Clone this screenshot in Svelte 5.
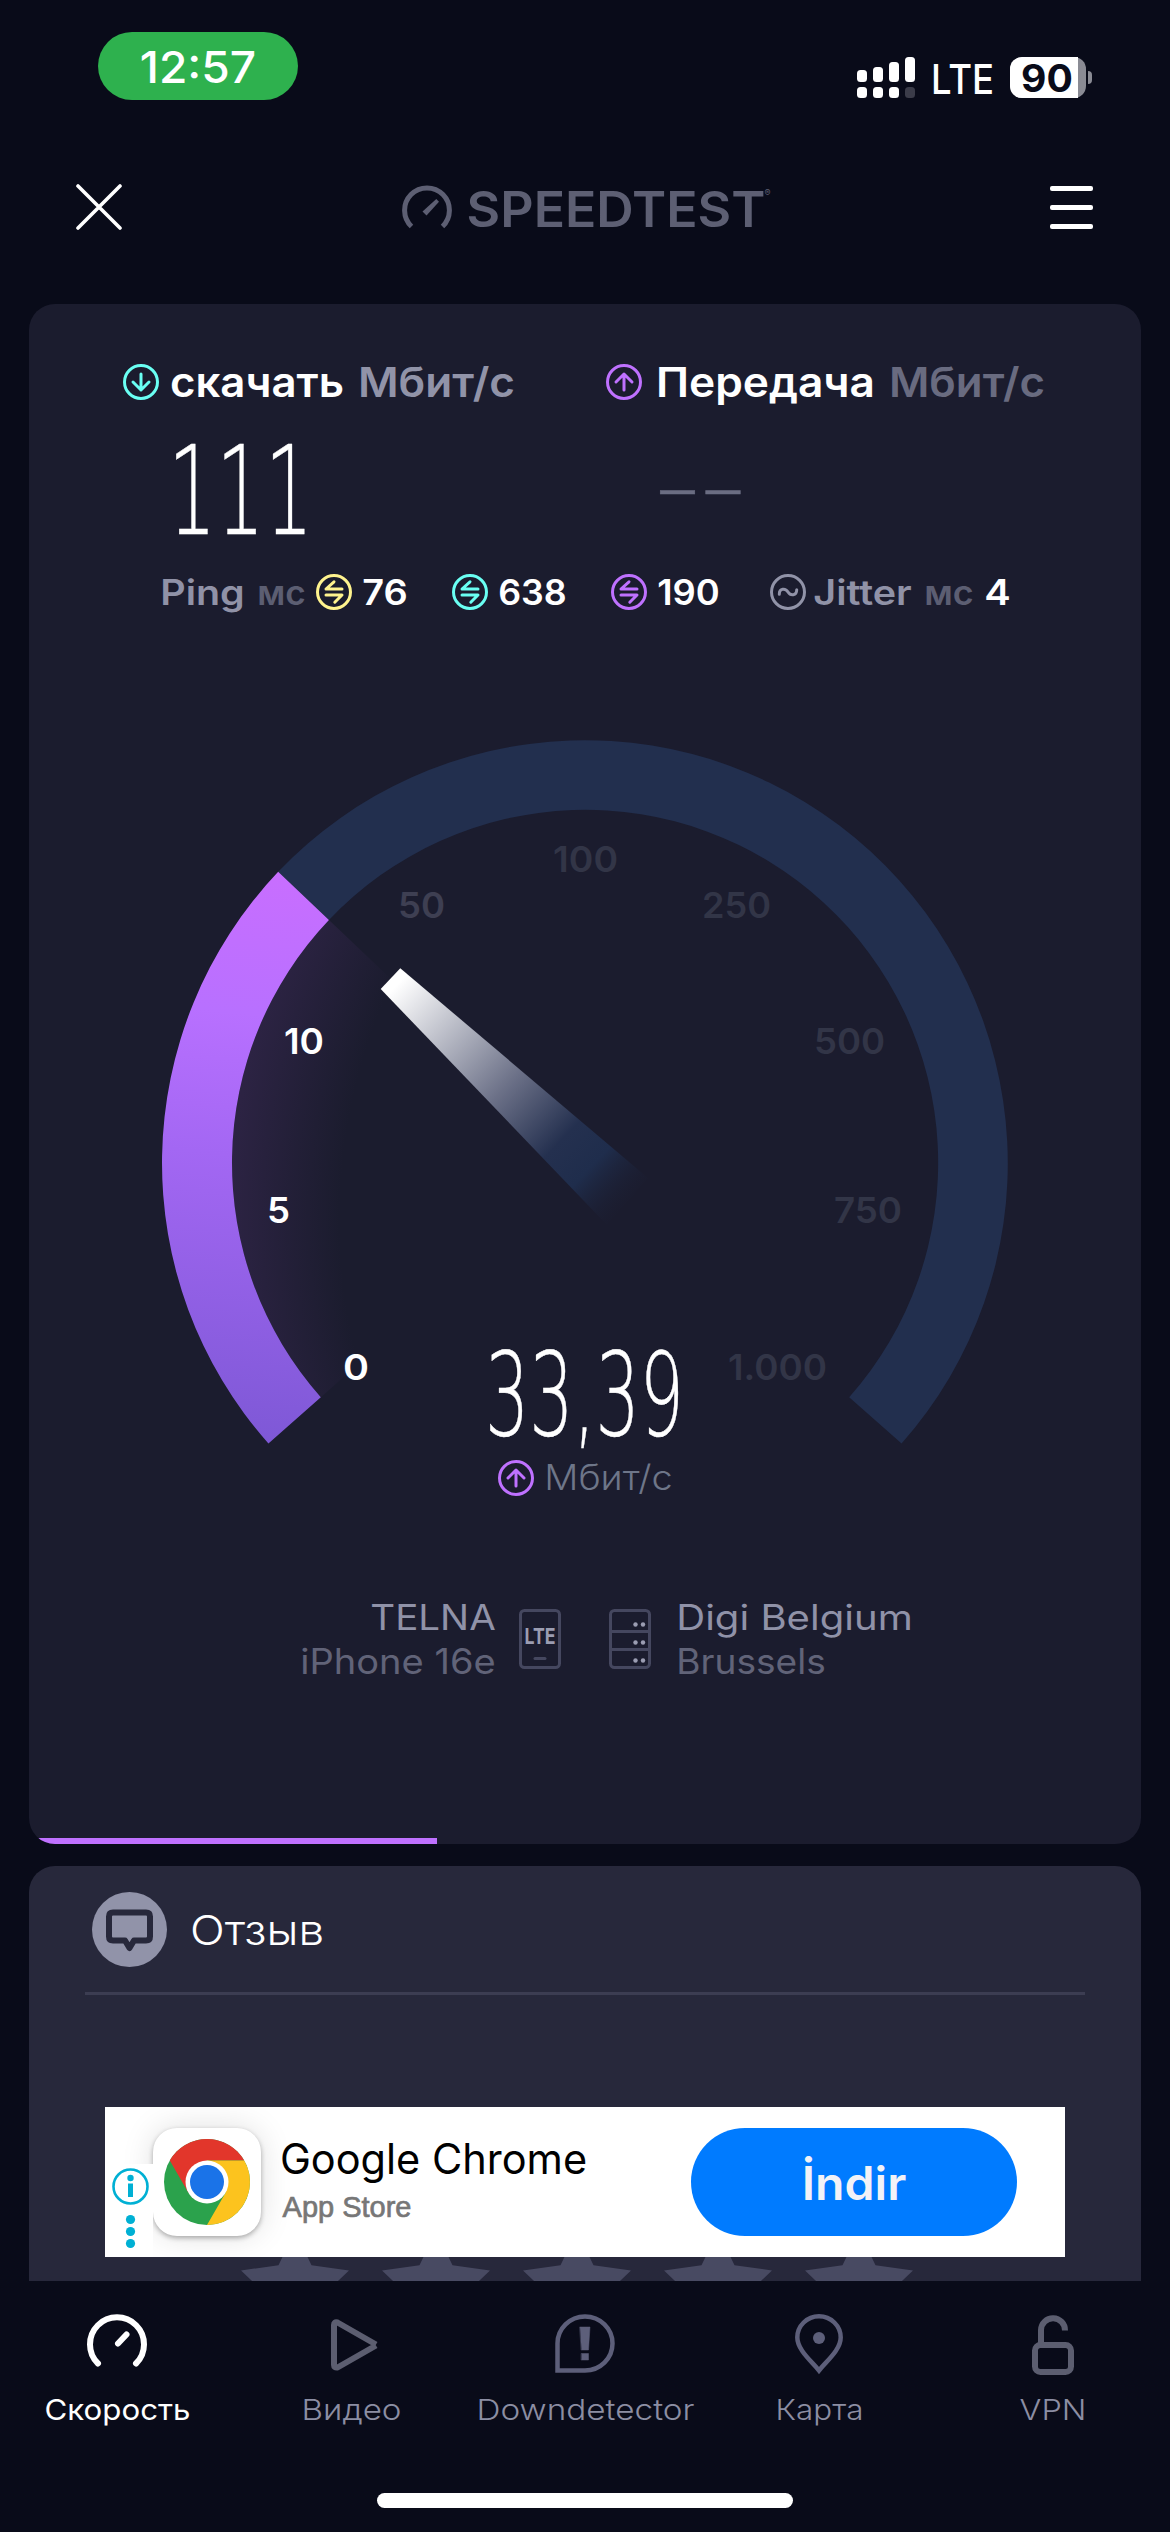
<script>
  const cyan = "#6afff3";
  const purple = "#bf71ff";
  const yellow = "#fff38e";

  const cx = 585;
  const cy = 1163;
  const outer = 423;
  const inner = 353;

  // angles are clockwise degrees from the positive x axis
  const start = 138.45;
  const current = 223.5;
  const end = 401.55;

  const point = (r, deg) => {
    const a = (deg * Math.PI) / 180;
    return `${(cx + r * Math.cos(a)).toFixed(2)} ${(cy + r * Math.sin(a)).toFixed(2)}`;
  };

  const band = (from, to) => {
    const large = to - from > 180 ? 1 : 0;
    return `M${point(outer, from)} A${outer} ${outer} 0 ${large} 1 ${point(outer, to)} L${point(inner, to)} A${inner} ${inner} 0 ${large} 0 ${point(inner, from)}Z`;
  };

  const glow = `M${cx} ${cy} L${point(inner, start)} A${inner} ${inner} 0 0 1 ${point(inner, current)}Z`;

  const ticks = [
    { text: "0", x: 345, y: 1380, w: 22, tone: "on" },
    { text: "5", x: 269, y: 1223, w: 19, tone: "on" },
    { text: "10", x: 286, y: 1054, w: 36, tone: "on" },
    { text: "50", x: 400, y: 918, w: 43, tone: "next" },
    { text: "100", x: 555, y: 872, w: 61, tone: "off" },
    { text: "250", x: 704, y: 918, w: 65, tone: "off" },
    { text: "500", x: 816, y: 1054, w: 67, tone: "off" },
    { text: "750", x: 836, y: 1223, w: 64, tone: "off" },
    { text: "1.000", x: 730, y: 1380, w: 95, tone: "off" },
  ];

  const tabs = [
    { id: "speed", name: "Скорость", w: 143 },
    { id: "video", name: "Видео", w: 97 },
    { id: "down", name: "Downdetector", w: 215 },
    { id: "map", name: "Карта", w: 85 },
    { id: "vpn", name: "VPN", w: 64 },
  ];
</script>

<!-- one line of text, its box is as high as the capitals -->
{#snippet label(text, w, size, weight = 400)}
  <svg class="label" width={w} height={size * 0.727} font-size={size} font-weight={weight}>
    <text x={-size * 0.05} y={size * 0.727} textLength={w + size * 0.1} lengthAdjust="spacingAndGlyphs">{text}</text>
  </svg>
{/snippet}

{#snippet round(kind, color)}
  <svg class="round" width="36" height="36" viewBox="0 0 36 36" stroke={color}>
    <circle cx="18" cy="18" r="16.5" />
    {#if kind === "down"}
      <path d="M18 10V26M10 18l8 8 8-8" />
    {:else if kind === "up"}
      <path d="M18 26V10M10 18l8-8 8 8" />
    {:else if kind === "swap"}
      <path d="M26 15H10L18 7.8M10 21H26L18.8 28.2" />
    {:else}
      <path d="M9.3 20.2C9.3 14 15.5 14 18 18s8.7 4 8.7-2.2" />
    {/if}
  </svg>
{/snippet}

<div class="screen">
  <div class="status">
    <div class="clock">{@render label("12:57", 112, 44, 500)}</div>
    <div class="system">
      <svg width="58" height="41" viewBox="0 0 58 41" fill="#fff">
        <rect x="0" y="13" width="10" height="12" rx="3.5" />
        <rect x="16" y="10" width="10" height="15" rx="3.5" />
        <rect x="32" y="5" width="10" height="20" rx="3.5" />
        <rect x="48" y="0" width="10" height="25" rx="3.5" />
        <rect x="0" y="30" width="10" height="11" rx="3.5" />
        <rect x="16" y="30" width="10" height="11" rx="3.5" />
        <rect x="32" y="30" width="10" height="11" rx="3.5" />
        <rect x="48" y="30" width="10" height="11" rx="3.5" fill="#3b3c49" />
      </svg>
      <div class="lte">{@render label("LTE", 59, 41, 500)}</div>
      <div class="battery">
        <div class="level">{@render label("90", 48, 38, 700)}</div>
      </div>
      <div class="nub"></div>
    </div>
  </div>

  <header>
    <svg width="46" height="46" viewBox="0 0 46 46" fill="none" stroke="#fff" stroke-width="3.6" stroke-linecap="round">
      <path d="M2 2L44 44M44 2L2 44" />
    </svg>
    <div class="logo">
      <svg width="50" height="44" viewBox="0 0 50 44" fill="none" stroke="#5d5f73" stroke-width="5">
        <path d="M9.5 41.5A22.4 22.4 0 1 1 40.5 41.5" />
        <path d="M20.5 26.5L34.3 14L37 16.8L24.5 30.5Z" fill="#5d5f73" stroke="none" />
      </svg>
      {@render label("SPEEDTEST", 294, 49, 600)}
      <sup>®</sup>
    </div>
    <div class="menu"><i></i><i></i><i></i></div>
  </header>

  <section class="card test">
    <div class="heads">
      <div class="head">
        {@render round("down", cyan)}
        {@render label("скачать", 170, 41, 600)}
        <span class="unit">{@render label("Мбит/с", 153, 41, 600)}</span>
      </div>
      <div class="head">
        {@render round("up", purple)}
        <span class="wide">{@render label("Передача", 215, 41, 600)}</span>
        <span class="unit dim">{@render label("Мбит/с", 152, 41, 600)}</span>
      </div>
    </div>

    <div class="results">
      <svg class="thin" width="129" height="90" font-size="123">
        <text x="-8" y="90" textLength="145" lengthAdjust="spacingAndGlyphs">111</text>
      </svg>
      <svg class="thin dashes" width="82" height="90" font-size="86">
        <text x="-4" y="72" letter-spacing="2.5">––</text>
      </svg>
    </div>

    <div class="latency">
      <span class="soft">{@render label("Ping", 81, 35, 600)}</span>
      <span class="ms">{@render label("мс", 45, 35, 600)}</span>
      {@render round("swap", yellow)}
      <span class="value">{@render label("76", 42, 35, 600)}</span>
      {@render round("swap", cyan)}
      <span class="value">{@render label("638", 65, 35, 600)}</span>
      {@render round("swap", purple)}
      <span class="value last">{@render label("190", 59, 35, 600)}</span>
      {@render round("wave", "#9193a8")}
      <span class="soft jitter">{@render label("Jitter", 95, 35, 600)}</span>
      <span class="ms">{@render label("мс", 46, 35, 600)}</span>
      <span class="value">{@render label("4", 23, 35, 600)}</span>
    </div>

    <svg class="gauge" width="856" height="716" viewBox="157 735 856 716">
      <defs>
        <linearGradient id="fill" gradientUnits="userSpaceOnUse" x1="330" y1="880" x2="270" y2="1444">
          <stop offset="0" stop-color="#c86eff" />
          <stop offset="0.25" stop-color="#b870ff" />
          <stop offset="0.5" stop-color="#a367f3" />
          <stop offset="1" stop-color="#7e58d6" />
        </linearGradient>
        <linearGradient id="needle" gradientUnits="userSpaceOnUse" x1="392" y1="980" x2="633" y2="1210">
          <stop offset="0.02" stop-color="#fff" />
          <stop offset="0.47" stop-color="#6b7087" />
          <stop offset="0.7" stop-color="#24304f" />
          <stop offset="0.82" stop-color="#1f2d4c" />
          <stop offset="1" stop-color="#1b1c2e" stop-opacity="0" />
        </linearGradient>
        <radialGradient id="shade" gradientUnits="userSpaceOnUse" cx="900" cy="1220" r="670">
          <stop offset="0.836" stop-color="#2c2343" stop-opacity="0" />
          <stop offset="1" stop-color="#2c2343" />
        </radialGradient>
      </defs>
      <path d={glow} fill="url(#shade)" />
      <path d={band(current, end)} fill="#222f4e" />
      <path d={band(start, current)} fill="url(#fill)" />
      <path d="M380.7 989L400.3 968.2L648 1178L607 1225Z" fill="url(#needle)" />
      {#each ticks as tick}
        <text class={tick.tone} x={tick.x - 2} y={tick.y} textLength={tick.w + 4} lengthAdjust="spacingAndGlyphs">{tick.text}</text>
      {/each}
    </svg>

    <div class="live">
      <svg class="thin" width="188" height="88" font-size="116">
        <text x="-5" y="86" textLength="199" lengthAdjust="spacingAndGlyphs">33,39</text>
      </svg>
      <div class="live-unit">
        {@render round("up", purple)}
        {@render label("Мбит/с", 125, 35, 300)}
      </div>
    </div>

    <div class="hosts">
      <div class="host right">
        {@render label("TELNA", 122, 35, 400)}
        <span>{@render label("iPhone 16e", 192, 35, 400)}</span>
      </div>
      <svg class="phone" width="42" height="60" viewBox="0 0 42 60" fill="none" stroke="#45475f" stroke-width="3">
        <rect x="1.5" y="1.5" width="39" height="57" rx="4" />
        <path d="M16 49.5H26" stroke-linecap="round" />
        <text class="chip" x="5.5" y="35" textLength="31" lengthAdjust="spacingAndGlyphs">LTE</text>
      </svg>
      <svg class="server" width="42" height="60" viewBox="0 0 42 60" fill="none" stroke="#45475f" stroke-width="3">
        <rect x="1.5" y="1.5" width="39" height="57" rx="4" />
        <path d="M1.5 22.5H40.5M1.5 40.5H40.5" />
        <g fill="#9b9db2" stroke="none">
          {#each [15.5, 33.5, 51.5] as y}
            <circle cx="26.5" cy={y} r="2.2" />
            <circle cx="34" cy={y} r="2.2" />
          {/each}
        </g>
      </svg>
      <div class="host">
        {@render label("Digi Belgium", 233, 35, 400)}
        <span>{@render label("Brussels", 146, 35, 400)}</span>
      </div>
    </div>

    <div class="progress"></div>
  </section>

  <section class="card review">
    <div class="title">
      <svg width="75" height="75" viewBox="0 0 75 75">
        <circle cx="37.5" cy="37.5" r="37.5" fill="#9193a9" />
        <path d="M21 20.5H54Q58 20.5 58 24.5V44.5Q58 48.5 54 48.5H42L37.5 56L33 48.5H21Q17 48.5 17 44.5V24.5Q17 20.5 21 20.5Z" fill="none" stroke="#27283b" stroke-width="6" stroke-linejoin="round" />
      </svg>
      {@render label("Отзыв", 130, 41, 300)}
    </div>
    <hr />
    <div class="stars">
      {#each Array(5) as _}
        <svg width="108" height="104" viewBox="-54 -57 108 104" fill="#484a62">
          <path d="M0-57L16.5-22.7L54-17.6L26.6 8.7L33.5 46L0 28L-33.5 46L-26.6 8.7L-54-17.6L-16.5-22.7Z" />
        </svg>
      {/each}
    </div>

    <div class="ad">
      <div class="choices">
        <svg width="48" height="93" viewBox="0 0 48 93" fill="#00b0d4">
          <circle cx="25.5" cy="22.5" r="17" fill="none" stroke="#00b0d4" stroke-width="2.6" />
          <circle cx="25.5" cy="14" r="3.2" />
          <rect x="23" y="19.5" width="5" height="13.5" />
          <circle cx="25.5" cy="55.5" r="4.6" />
          <circle cx="25.5" cy="67.5" r="4.6" />
          <circle cx="25.5" cy="79.5" r="4.6" />
        </svg>
      </div>
      <div class="app">
        <svg width="86" height="86" viewBox="-43 -43 86 86">
          <circle r="43" fill="#2ba24c" />
          <path d="M-37.2-21.5A43 43 0 0 1 37.2-21.5H0L-18.6 10.8Z" fill="#e2362b" />
          <path d="M37.2-21.5A43 43 0 0 1 0 43L18.6 10.8L0-21.5Z" fill="#fcc31e" />
          <circle r="21.5" fill="#fff" />
          <circle r="17" fill="#1a73e8" />
        </svg>
      </div>
      <div class="about">
        {@render label("Google Chrome", 303, 42, 400)}
        <span>{@render label("App Store", 126, 29, 400)}</span>
      </div>
      <div class="get">{@render label("İndir", 100, 46, 600)}</div>
    </div>
  </section>

  <nav>
    <div class="tabs">
      {#each tabs as tab}
        <div class="tab" class:active={tab.id === "speed"}>
          <svg width="64" height="64" viewBox="-32 -32 64 64" fill="none" stroke="#5c5e70" stroke-width="6" stroke-linecap="round" stroke-linejoin="round">
            {#if tab.id === "speed"}
              <path d="M-19 19.5A27 27 0 1 1 19 19.5M1-.5L9.5-9.5" stroke="#fff" />
            {:else if tab.id === "video"}
              <path d="M25 1.5L-13.5 23.5Q-17 24-17 21V-19Q-17-22.5-13.5-21.5L25 .5" stroke-linecap="butt" />
            {:else if tab.id === "down"}
              <g stroke="#5d5f7a" stroke-width="4.5" stroke-linejoin="miter">
                <path d="M-27.5 26.5V-.5A27.5 27 0 1 1 0 26.5Z" />
                <path d="M-5-17H5L3.5 6H-3.5ZM-3.5 9.5H3.5V16H-3.5Z" fill="#5d5f7a" stroke-width="0.5" />
              </g>
            {:else if tab.id === "map"}
              <g stroke="#5d5f7a" stroke-width="4.5" stroke-linejoin="miter">
                <path d="M0 26.5C-7 17.5-21.7 6-21.7-6.5A21.7 21.2 0 0 1 21.7-6.5C21.7 6 7 17.5 0 26.5Z" />
                <circle cy="-6" r="6" fill="#5d5f7a" stroke="none" />
              </g>
            {:else}
              <rect x="-18" y="1" width="36" height="27" rx="5.5" />
              <path d="M-12 1V-14A12 12 0 0 1 12-13.5" stroke-linecap="butt" />
            {/if}
          </svg>
          {@render label(tab.name, tab.w, 29, tab.id === "speed" ? 400 : 300)}
        </div>
      {/each}
    </div>
    <div class="home"></div>
  </nav>
</div>

<style>
  :global(body) {
    margin: 0;
    background: #090b19;
  }
  .screen {
    display: flex;
    flex-direction: column;
    width: 1170px;
    height: 2532px;
    overflow: hidden;
    background: #090b19;
    color: #fff;
    font-family: Inter, "Liberation Sans", sans-serif;
  }
  svg {
    display: block;
    flex: none;
  }
  .label {
    overflow: visible;
    fill: currentColor;
  }
  .round {
    fill: none;
    stroke-width: 3;
    stroke-linecap: round;
    stroke-linejoin: round;
  }
  .thin {
    overflow: visible;
    fill: #fff;
    stroke: #fff;
    stroke-width: 0.5px;
    font-family: "DejaVu Sans", sans-serif;
    font-weight: 200;
  }

  .status {
    display: flex;
    justify-content: space-between;
    align-items: flex-start;
    height: 152px;
    padding: 32px 78px 0 98px;
    box-sizing: border-box;
  }
  .clock {
    display: flex;
    align-items: center;
    justify-content: center;
    width: 200px;
    height: 68px;
    padding-top: 1px;
    box-sizing: border-box;
    border-radius: 34px;
    background: #2eb14e;
  }
  .system {
    display: flex;
    align-items: center;
    padding-top: 25px;
  }
  .lte {
    margin: 3px 18px 0;
  }
  .battery {
    width: 76px;
    height: 41px;
    border-radius: 12px;
    background: #8a8b94;
  }
  .level {
    display: flex;
    align-items: center;
    justify-content: center;
    width: 68px;
    height: 41px;
    padding-left: 6px;
    box-sizing: border-box;
    border-radius: 12px 0 0 12px;
    background: #fff;
    color: #090b19;
  }
  .nub {
    width: 4px;
    height: 13px;
    margin-left: 2px;
    border-radius: 0 4px 4px 0;
    background: #8a8b94;
  }

  header {
    display: flex;
    justify-content: space-between;
    align-items: center;
    height: 110px;
    margin-bottom: 42px;
    padding: 0 77px 0 76px;
  }
  .logo {
    display: flex;
    align-items: center;
    gap: 17px;
    margin-left: 1px;
    color: #5d5f73;
  }
  .logo :global(.label) {
    margin-top: 3px;
  }
  sup {
    align-self: flex-start;
    margin: 3px 0 0 -16px;
    font-size: 9px;
    line-height: 10px;
  }
  .menu {
    display: flex;
    flex-direction: column;
    gap: 14px;
  }
  .menu i {
    width: 43px;
    height: 5px;
    border-radius: 2px;
    background: #fff;
  }

  .card {
    position: relative;
    width: 1112px;
    margin: 0 auto;
    box-sizing: border-box;
    overflow: hidden;
  }
  .test {
    display: flex;
    flex-direction: column;
    height: 1540px;
    padding-top: 60px;
    border-radius: 26px;
    background: #1b1c2e;
  }
  .heads {
    display: flex;
    gap: 93px;
    padding-left: 94px;
  }
  .head {
    display: flex;
    align-items: center;
    height: 36px;
    gap: 13px;
  }
  .wide {
    margin-left: 3px;
  }
  .unit {
    margin-left: 5px;
    color: #9193a8;
  }
  .dim {
    color: #696b80;
  }
  .results {
    display: flex;
    margin-top: 44px;
    padding-left: 147px;
    gap: 355px;
  }
  .dashes {
    fill: #6b6d82;
    stroke: #6b6d82;
  }
  .latency {
    display: flex;
    align-items: center;
    height: 36px;
    margin: 40px 133px 0;
  }
  .latency :global(.label) {
    margin-top: 1px;
  }
  .soft {
    color: #9092a7;
  }
  .ms {
    margin: 0 12px 0 16px;
    color: #5c5e72;
  }
  .value {
    margin: 0 46px 0 12px;
  }
  .last {
    margin-right: 52px;
  }
  .jitter {
    margin-left: 9px;
  }
  .jitter ~ .ms {
    margin-right: 2px;
  }
  .jitter ~ .value {
    margin-right: 0;
  }

  .gauge {
    margin: 125px 0 0 128px;
    font-size: 36px;
    font-weight: 600;
  }
  .on {
    fill: #fff;
  }
  .next {
    fill: #3e3f52;
  }
  .off {
    fill: #323547;
  }
  /* the reading sits in the open bottom of the arc */
  .live {
    display: flex;
    flex-direction: column;
    align-items: center;
    margin-top: -102px;
    padding-right: 2px;
  }
  .live-unit {
    display: flex;
    align-items: center;
    gap: 12px;
    height: 36px;
    margin-top: 23px;
    color: #6e7689;
  }
  .hosts {
    display: flex;
    margin-top: 109px;
    padding-left: 273px;
    align-items: flex-start;
  }
  .phone {
    margin: 4px 0 0 25px;
    overflow: visible;
  }
  .server {
    margin: 4px 27px 0 48px;
  }
  .host {
    display: flex;
    flex-direction: column;
    gap: 19px;
    color: #9092a8;
  }
  .host span {
    color: #616378;
  }
  .right {
    align-items: flex-end;
  }
  .chip {
    fill: #9b9db2;
    stroke: none;
    font-size: 22px;
    font-weight: 700;
  }
  .progress {
    width: 408px;
    height: 6px;
    margin-top: auto;
    background: #bf71ff;
  }

  .review {
    height: 415px;
    margin-top: 22px;
    padding-top: 26px;
    border-radius: 26px 26px 0 0;
    background: #27283b;
  }
  .title {
    display: flex;
    align-items: center;
    gap: 25px;
    padding-left: 63px;
  }
  hr {
    height: 3px;
    margin: 25px 56px 0;
    border: 0;
    background: #3c3d52;
  }
  .stars {
    display: flex;
    gap: 33px;
    margin: 236px 0 0 212px;
  }
  .ad {
    position: absolute;
    left: 76px;
    top: 241px;
    display: flex;
    align-items: center;
    width: 960px;
    height: 150px;
    background: #fff;
    color: #000;
    overflow: hidden;
  }
  .choices {
    position: relative;
    z-index: 1;
    align-self: flex-end;
    background: #fff;
  }
  .app {
    display: flex;
    align-items: center;
    justify-content: center;
    width: 108px;
    height: 108px;
    border-radius: 24px;
    background: #fff;
    box-shadow: 0 2px 5px rgba(0, 0, 0, 0.3), 0 0 32px rgba(0, 0, 0, 0.13);
  }
  .about {
    display: flex;
    flex-direction: column;
    gap: 23px;
    width: 409px;
    margin: -4px 0 0 21px;
  }
  .about span {
    padding-left: 2px;
    color: #777;
    font-family: "Liberation Sans", Arial, sans-serif;
  }
  .about span :global(.label) {
    stroke: #777;
    stroke-width: 0.7px;
  }
  .get {
    display: flex;
    align-items: center;
    justify-content: center;
    width: 326px;
    height: 108px;
    border-radius: 54px;
    background: #007bff;
    color: #f2f2f7;
  }
  .get :global(.label) {
    margin-top: 3px;
  }

  nav {
    display: flex;
    flex-direction: column;
    align-items: center;
    height: 251px;
    background: #090b19;
  }
  .tabs {
    display: flex;
    width: 100%;
    padding-top: 31px;
  }
  .tab {
    display: flex;
    flex-direction: column;
    align-items: center;
    gap: 23px;
    width: 234px;
    color: #8c8ea3;
  }
  .active {
    color: #fff;
  }
  .home {
    width: 416px;
    height: 15px;
    margin-top: 73px;
    border-radius: 8px;
    background: #fff;
  }
</style>
